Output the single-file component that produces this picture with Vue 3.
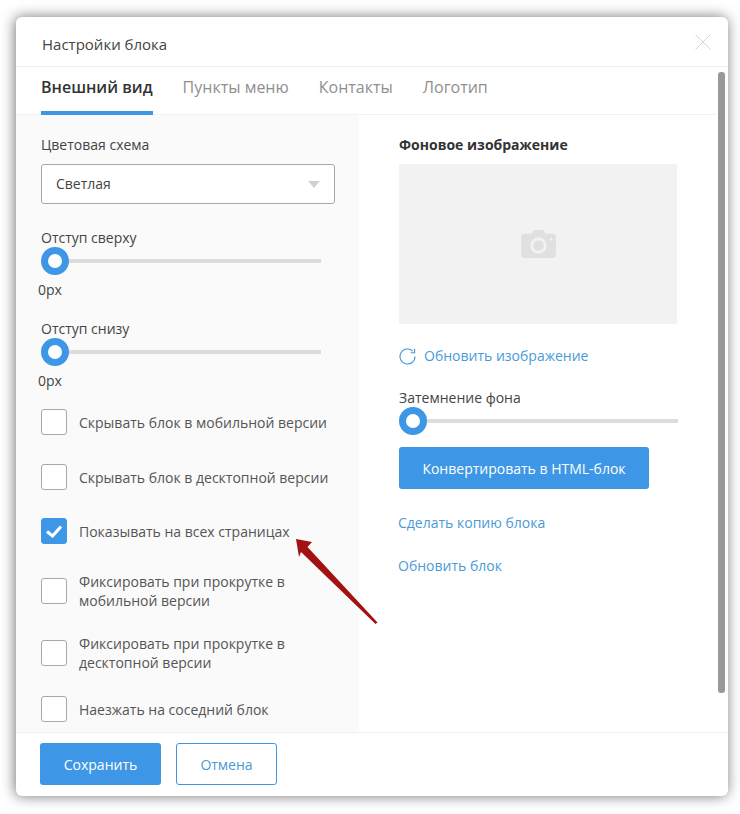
<script setup>
const checks = [
  { text: 'Скрывать блок в мобильной версии', cls: 'c1' },
  { text: 'Скрывать блок в десктопной версии', cls: 'c2' },
  { text: 'Показывать на всех страницах', cls: 'c3', on: true },
  { text: 'Фиксировать при прокрутке в мобильной версии', cls: 'c4' },
  { text: 'Фиксировать при прокрутке в десктопной версии', cls: 'c5' },
  { text: 'Наезжать на соседний блок', cls: 'c6' },
]
const tabs = ['Внешний вид', 'Пункты меню', 'Контакты', 'Логотип']
</script>

<template>
  <div class="page">
    <div class="modal">
      <header class="head">
        <span class="title">Настройки блока</span>
        <svg class="close" width="16" height="16" viewBox="0 0 16 16"><path d="M.5.5l15 15M15.500.5l-15 15" stroke="#d4d4d4" fill="none"/></svg>
      </header>
      <nav class="tabs">
        <span v-for="(t, i) in tabs" :key="t" class="tab" :class="{ active: i === 0 }">{{ t }}</span>
      </nav>
      <div class="body">
        <section class="left">
          <div class="label">Цветовая схема</div>
          <div class="select">Светлая<i class="caret"></i></div>
          <div class="label l2">Отступ сверху</div>
          <div class="slider"><i class="thumb"></i></div>
          <div class="val">0px</div>
          <div class="label l3">Отступ снизу</div>
          <div class="slider"><i class="thumb"></i></div>
          <div class="val">0px</div>
          <div v-for="c in checks" :key="c.text" class="check" :class="c.cls">
            <span class="box" :class="{ on: c.on }">
              <svg v-if="c.on" width="16" height="13" viewBox="0 0 16 13"><path d="M1 6.500l5.500 4.500 8.500-9.500" stroke="#fff" stroke-width="3" fill="none"/></svg>
            </span>
            <span class="ctext">{{ c.text }}</span>
          </div>
        </section>
        <section class="right">
          <div class="rhead">Фоновое изображение</div>
          <div class="image">
            <svg class="cam" width="35" height="28" viewBox="0 0 36 29">
              <path fill="#e0e0e0" fill-rule="evenodd" d="M3 4h8l2-4h10l2 4h8a3 3 0 0 1 3 3v19a3 3 0 0 1-3 3H3a3 3 0 0 1-3-3V7a3 3 0 0 1 3-3zm15 3.500a8.500 8.500 0 1 0 0 17 8.500 8.500 0 0 0 0-17zm0 3a5.500 5.500 0 1 1 0 11 5.500 5.500 0 0 1 0-11z"/>
              <circle cx="31" cy="9.500" r="1.300" fill="#f2f2f2"/>
            </svg>
          </div>
          <div class="refresh">
            <svg width="17" height="17" viewBox="0 0 17 17"><path d="M13.800 3.200A7.500 7.500 0 1 0 16 8.500" stroke="#3f97dc" stroke-width="1.100" fill="none"/><path d="M15.600 .8v4h-4" stroke="#3f97dc" stroke-width="1.100" fill="none"/></svg>
            <span>Обновить изображение</span>
          </div>
          <div class="label dim">Затемнение фона</div>
          <div class="slider wide"><i class="thumb"></i></div>
          <button class="convert">Конвертировать в HTML-блок</button>
          <div class="link first">Сделать копию блока</div>
          <div class="link">Обновить блок</div>
        </section>
      </div>
      <footer class="foot">
        <button class="save">Сохранить</button>
        <button class="cancel">Отмена</button>
      </footer>
      <i class="scrollbar"></i>
      <svg class="arrow" width="90" height="92" viewBox="0 0 90 92">
        <path fill="#a31212" d="M1 0L17 3L12.500 8L82.500 83.500L80.500 85L6 13L4 18Z"/>
      </svg>
    </div>
  </div>
</template>

<style>
html, body { margin: 0; background: #fff; }
</style>

<style scoped>
.page {
  width: 740px;
  height: 814px;
  box-sizing: border-box;
  padding: 17px 12px 18px 16px;
  font-family: "Open Sans", sans-serif;
  font-size: 14px;
  color: #444;
  overflow: hidden;
}
.modal {
  position: relative;
  height: 779px;
  display: flex;
  flex-direction: column;
  background: #fff;
  border-radius: 6px;
  box-shadow: -1px 0 14px rgba(0, 0, 0, .55);
}
.head {
  height: 50px;
  flex: none;
  display: flex;
  align-items: center;
  justify-content: space-between;
  padding: 4px 17px 0 26px;
  box-sizing: border-box;
  border-bottom: 1px solid #eee;
}
.title { font-size: 15px; color: #444; }
.close { margin-top: -3px; }
.tabs {
  height: 48px;
  flex: none;
  box-sizing: border-box;
  margin-right: 12px;
  padding-left: 25px;
  display: flex;
  gap: 30px;
  border-bottom: 1px solid #f2f2f2;
}
.tab {
  font-size: 16px;
  line-height: 41px;
  color: #8f8f8f;
  height: 48px;
  box-sizing: border-box;
}
.tab.active {
  color: #333;
  font-weight: 600;
  border-bottom: 4px solid #3d97e6;
}
.body {
  flex: 1;
  min-height: 0;
  overflow: hidden;
  display: flex;
}
.left {
  width: 343px;
  flex: none;
  box-sizing: border-box;
  background: #fafafa;
  padding: 20px 24px 0 25px;
}
.right {
  flex: 1;
  padding: 20px 0 0 40px;
}
.label { line-height: 20px; color: #444; }
.select {
  position: relative;
  margin-top: 9px;
  width: 294px;
  height: 40px;
  box-sizing: border-box;
  border: 1px solid #a8a8a8;
  border-radius: 3px;
  background: #fff;
  padding-left: 14px;
  line-height: 38px;
  color: #444;
}
.caret {
  position: absolute;
  right: 14px;
  top: 16px;
  border-left: 6px solid transparent;
  border-right: 6px solid transparent;
  border-top: 7px solid #d0d0d0;
}
.l2 { margin-top: 24px; }
.l3 { margin-top: 19px; }
.slider {
  position: relative;
  width: 280px;
  height: 4px;
  margin-top: 11px;
  background: #dcdcdc;
}
.slider.wide { width: 279px; margin-top: 11px; }
.thumb {
  position: absolute;
  left: 0;
  top: -12px;
  width: 28px;
  height: 28px;
  box-sizing: border-box;
  border: 7px solid #3d97e6;
  border-radius: 50%;
  background: #fff;
}
.val { margin: 17px 0 0 -3px; line-height: 20px; }
.check { display: flex; align-items: center; gap: 12px; line-height: 19px; color: #555; font-size: 14px; }
.c1 { margin-top: 18px; }
.c2 { margin-top: 29px; }
.c3 { margin-top: 28px; }
.c4 { margin-top: 28px; }
.c5 { margin-top: 24px; }
.c6 { margin-top: 24px; }
.box {
  flex: none;
  width: 26px;
  height: 26px;
  box-sizing: border-box;
  border: 1px solid #a8a8a8;
  border-radius: 3px;
  background: #fff;
  display: flex;
  align-items: center;
  justify-content: center;
}
.box.on { background: #3d97e6; border-color: #3d97e6; }
.rhead { font-weight: 700; line-height: 20px; color: #333; }
.image {
  margin-top: 9px;
  width: 278px;
  height: 160px;
  background: #f2f2f2;
  display: flex;
  align-items: center;
  justify-content: center;
}
.cam { margin-left: 1px; }
.refresh {
  margin-top: 22px;
  display: flex;
  align-items: center;
  gap: 8px;
  line-height: 20px;
  color: #4b9ad6;
}
.dim { margin-top: 22px; }
.convert {
  display: block;
  margin-top: 24px;
  width: 250px;
  height: 42px;
  border: 0;
  border-radius: 3px;
  background: #3d97e6;
  color: #fff;
  font: 500 14px "Open Sans", sans-serif;
}
.link { line-height: 20px; color: #4b9ad6; margin: 23px 0 0 -1px; }
.link.first { margin-top: 24px; }
.foot {
  height: 64px;
  flex: none;
  box-sizing: border-box;
  border-top: 1px solid #eee;
  padding: 10px 0 0 24px;
  display: flex;
  align-items: flex-start;
  gap: 15px;
}
.save, .cancel {
  height: 42px;
  border-radius: 3px;
  font: 500 14px "Open Sans", sans-serif;
  box-sizing: border-box;
}
.save { width: 121px; border: 0; background: #3d97e6; color: #fff; }
.cancel { width: 101px; border: 1px solid #3d97e6; background: #fff; color: #4b9ad6; }
.scrollbar {
  position: absolute;
  left: 702px;
  top: 55px;
  width: 7px;
  height: 621px;
  border-radius: 3px;
  background: #999;
}
.arrow {
  position: absolute;
  left: 279px;
  top: 522px;
}
</style>
